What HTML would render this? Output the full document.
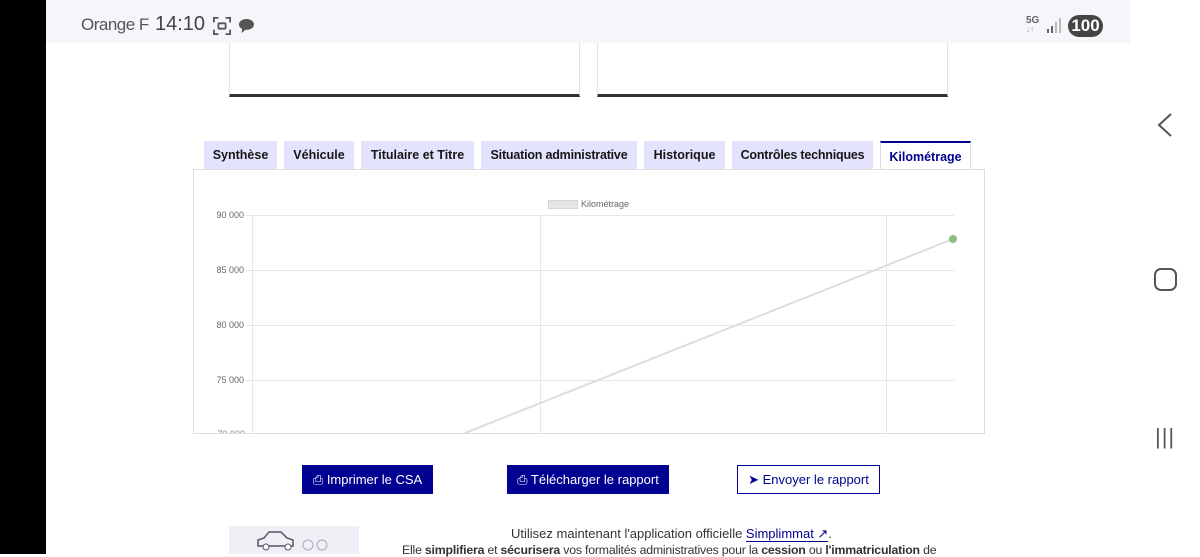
<!DOCTYPE html>
<html><head><meta charset="utf-8"><style>
*{margin:0;padding:0;box-sizing:border-box}
body{width:1200px;height:554px;overflow:hidden;background:#fff;font-family:"Liberation Sans",sans-serif;position:relative}
.a{position:absolute}
.tab{position:absolute;top:141px;height:28px;background:#e3e3fd;color:#161616;font-size:12.5px;font-weight:bold;display:flex;align-items:center;justify-content:center;white-space:nowrap}
.yl{position:absolute;left:200px;width:44px;text-align:right;font-size:9px;color:#666}
.gh{position:absolute;left:246px;width:708px;height:1px;background:#e6e6e6}
.btn{position:absolute;top:465px;height:29px;font-size:13px;display:flex;align-items:center;justify-content:center;gap:6px}
</style></head><body>
<div class="a" style="left:0;top:0;width:46px;height:554px;background:#000"></div>
<div class="a" style="left:46px;top:0;width:1084px;height:43px;background:#f7f5fa"></div>
<div class="a" style="left:81px;top:15px;font-size:17px;color:#555;letter-spacing:-0.5px">Orange F</div>
<div class="a" style="left:155px;top:13px;font-size:20px;color:#444">14:10</div>
<svg class="a" style="left:213px;top:17px" width="18" height="18" viewBox="0 0 20 20" fill="none" stroke="#555" stroke-width="2"><path d="M1 6V1h5M14 1h5v5M19 14v5h-5M6 19H1v-5"/><rect x="6" y="7" width="8" height="6" rx="1"/></svg>
<svg class="a" style="left:238px;top:18px" width="17" height="16" viewBox="0 0 17 16"><path d="M8.5 1C4 1 1 3.5 1 6.5c0 2 1.3 3.5 3.2 4.3L3.5 15l4-3.2h1C13 11.8 16 9.4 16 6.5S13 1 8.5 1z" fill="#555"/></svg>
<div class="a" style="left:1026px;top:15px;font-size:10px;font-weight:bold;color:#666">5G</div>
<div class="a" style="left:1026px;top:25px;font-size:8px;color:#999">↓↑</div>
<svg class="a" style="left:1047px;top:18px" width="16" height="15"><rect x="0" y="11" width="2" height="4" fill="#666"/><rect x="4" y="8" width="2" height="7" fill="#666"/><rect x="8" y="4" width="2" height="11" fill="#bbb"/><rect x="12" y="0" width="2" height="15" fill="#bbb"/></svg>
<div class="a" style="left:1068px;top:15px;width:35px;height:22px;border-radius:11px;background:#444;color:#fff;font-size:17px;font-weight:bold;text-align:center;line-height:22px">100</div>
<svg class="a" style="left:1155px;top:112px" width="20" height="26"><path d="M16 2L4 13l12 11" stroke="#555" stroke-width="2" fill="none"/></svg>
<div class="a" style="left:1154px;top:268px;width:23px;height:23px;border:2.5px solid #555;border-radius:7px"></div>
<div class="a" style="left:1155px;top:424px;font-size:22px;color:#555;letter-spacing:1px">|||</div>
<div class="a" style="left:229px;top:43px;width:351px;height:54px;border:1px solid #e5e5e5;border-top:none;border-bottom:3px solid #333"></div>
<div class="a" style="left:597px;top:43px;width:351px;height:54px;border:1px solid #e5e5e5;border-top:none;border-bottom:3px solid #333"></div>
<div class="tab" style="left:204px;width:73px">Synthèse</div>
<div class="tab" style="left:284px;width:70px">Véhicule</div>
<div class="tab" style="left:361px;width:113px">Titulaire et Titre</div>
<div class="tab" style="left:481px;width:156px;letter-spacing:-0.2px">Situation administrative</div>
<div class="tab" style="left:644px;width:81px">Historique</div>
<div class="tab" style="left:732px;width:141px;letter-spacing:-0.2px">Contrôles techniques</div>
<div class="tab" style="left:880px;width:91px;background:#fff;color:#000091;border-top:2px solid #000091;border-left:1px solid #ddd;border-right:1px solid #ddd;height:29px">Kilométrage</div>
<div class="a" style="left:193px;top:169px;width:792px;height:265px;border:1px solid #ddd;overflow:hidden">
<div class="a" style="left:7px;top:259px;width:44px;text-align:right;font-size:9px;color:#888">70 000</div>
</div>
<div class="a" style="left:548px;top:200px;width:30px;height:9px;background:#e5e5e5;border:1px solid #d5d5d5"></div>
<div class="a" style="left:581px;top:199px;font-size:9px;color:#666">Kilométrage</div>
<div class="gh" style="top:215px"></div><div class="gh" style="top:270px"></div><div class="gh" style="top:325px"></div><div class="gh" style="top:380px"></div>
<div class="yl" style="top:210px">90 000</div><div class="yl" style="top:265px">85 000</div><div class="yl" style="top:320px">80 000</div><div class="yl" style="top:375px">75 000</div>
<div class="a" style="left:252px;top:215px;width:1px;height:218px;background:#e6e6e6"></div>
<div class="a" style="left:540px;top:215px;width:1px;height:218px;background:#e6e6e6"></div>
<div class="a" style="left:886px;top:215px;width:1px;height:218px;background:#e6e6e6"></div>
<svg class="a" style="left:0;top:0" width="1200" height="433"><line x1="465" y1="433" x2="953" y2="239" stroke="#ddd" stroke-width="2"/><circle cx="953" cy="239" r="4" fill="#8fbf7f"/></svg>
<div class="btn" style="left:302px;width:131px;background:#000091;color:#fff">⎙ Imprimer le CSA</div>
<div class="btn" style="left:507px;width:162px;background:#000091;color:#fff">⎙ Télécharger le rapport</div>
<div class="btn" style="left:737px;width:143px;border:1px solid #000091;color:#000091">➤ Envoyer le rapport</div>
<div class="a" style="left:229px;top:526px;width:130px;height:28px;background:#eef0f6"></div>
<svg class="a" style="left:256px;top:530px" width="75" height="22"><path d="M2 16v-6l6-2 5-6h12l6 6 6 2v6z" fill="none" stroke="#556" stroke-width="1.5"/><circle cx="10" cy="17" r="3" fill="#fff" stroke="#556"/><circle cx="32" cy="17" r="3" fill="#fff" stroke="#556"/><circle cx="52" cy="15" r="5" fill="none" stroke="#aab"/><circle cx="66" cy="15" r="5" fill="none" stroke="#aab"/></svg>
<div class="a" style="left:511px;top:526px;font-size:13px;color:#333;white-space:nowrap">Utilisez maintenant l'application officielle <span style="border-bottom:1px solid #000091;color:#000091">Simplimmat ↗</span>.</div>
<div class="a" style="left:402px;top:543px;font-size:12.3px;color:#333;white-space:nowrap;letter-spacing:-0.2px">Elle <b>simplifiera</b> et <b>sécurisera</b> vos formalités administratives pour la <b>cession</b> ou <b>l'immatriculation</b> de</div>
</body></html>
